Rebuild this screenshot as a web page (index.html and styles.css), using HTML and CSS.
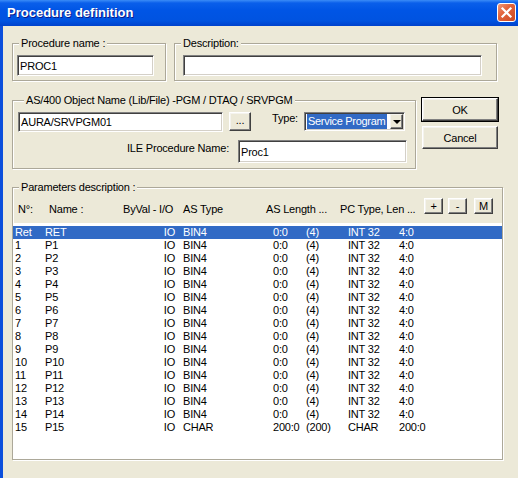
FILE: index.html
```html
<!DOCTYPE html>
<html>
<head>
    <link rel="stylesheet" href="styles.css">
</head>
<body>
    <div class="window">
        <div class="titlebar">
            <span class="title">Procedure definition</span>
            <span class="close-btn">
                <svg width="17" height="17" viewBox="0 0 17 17">
                    <path d="M4.5 4.5 L12.5 12.5 M12.5 4.5 L4.5 12.5" stroke="#fff" stroke-width="2.2" stroke-linecap="square"/>
                </svg>
            </span>
        </div>
        <div class="client">
            <div class="row-top">
                <fieldset class="group g-name">
                    <legend>Procedure name :</legend>
                    <input class="edit e-name" type="text" value="PROC1">
                </fieldset>
                <fieldset class="group g-desc">
                    <legend>Description:</legend>
                    <input class="edit e-desc" type="text" value="">
                </fieldset>
            </div>

            <div class="row-mid">
                <fieldset class="group g-obj">
                    <legend>AS/400 Object Name (Lib/File) -PGM / DTAQ / SRVPGM</legend>
                    <div class="obj-line">
                        <input class="edit e-obj" type="text" value="AURA/SRVPGM01">
                        <button class="btn btn-browse">...</button>
                        <span class="lbl lbl-type">Type:</span>
                        <div class="combo">
                            <span class="combo-text">Service Program</span>
                            <span class="combo-arrow"><span class="tri"></span></span>
                        </div>
                    </div>
                    <div class="ile-line">
                        <span class="lbl lbl-ile">ILE Procedure Name:</span>
                        <input class="edit e-ile" type="text" value="Proc1">
                    </div>
                </fieldset>
                <div class="actions">
                    <button class="btn btn-ok">OK</button>
                    <button class="btn btn-cancel">Cancel</button>
                </div>
            </div>

            <fieldset class="group g-params">
                <legend>Parameters description :</legend>
                <div class="params-head">
                    <span class="h-num">N°:</span>
                    <span class="h-name">Name :</span>
                    <span class="h-io">ByVal - I/O</span>
                    <span class="h-type">AS Type</span>
                    <span class="h-len">AS Length ...</span>
                    <span class="h-pc">PC Type, Len ...</span>
                    <button class="btn btn-small">+</button>
                    <button class="btn btn-small">-</button>
                    <button class="btn btn-small btn-m">M</button>
                </div>
                <div class="plist" id="plist"></div>
            </fieldset>
        </div>
    </div>

    <script>
        // parameter rows: num, name, io, type, len, (len), pc type, pc len
        const rows = [['Ret', 'RET', 'IO', 'BIN4', '0:0', '(4)', 'INT 32', '4:0']];
        for (let i = 1; i <= 14; i++) {
            rows.push([String(i), 'P' + i, 'IO', 'BIN4', '0:0', '(4)', 'INT 32', '4:0']);
        }
        rows.push(['15', 'P15', 'IO', 'CHAR', '200:0', '(200)', 'CHAR', '200:0']);

        const list = document.getElementById('plist');
        rows.forEach((r, idx) => {
            const row = document.createElement('div');
            row.className = 'prow' + (idx === 0 ? ' selected' : '');
            r.forEach((val, c) => {
                const cell = document.createElement('span');
                cell.className = 'c' + c;
                cell.textContent = val;
                row.appendChild(cell);
            });
            list.appendChild(row);
        });
    </script>
</body>
</html>
```

FILE: styles.css
```css
* {
    box-sizing: border-box;
}
body {
    margin: 0;
    width: 518px;
    height: 478px;
    overflow: hidden;
    background-color: #ece9d8;
    font-family: "Liberation Sans", Arial, sans-serif;
    font-size: 11px;
    letter-spacing: -0.2px;
    color: #000;
}
.window {
    height: 478px;
    display: flex;
    flex-direction: column;
}
.titlebar {
    height: 26px;
    flex: none;
    display: flex;
    align-items: center;
    justify-content: space-between;
    padding-left: 7px;
    background: linear-gradient(#3b8cf7 0, #0a5fea 3px, #0055e5 40%, #0053e0 80%, #0042cc 100%);
}
.title {
    color: #fff;
    font-size: 13px;
    font-weight: bold;
    letter-spacing: 0;
    text-shadow: 1px 1px #0a1a8a;
    margin-top: -1px;
}
.close-btn {
    width: 19px;
    height: 19px;
    margin-right: 2px;
    margin-top: -1px;
    border: 1px solid #fff;
    border-radius: 3px;
    background: linear-gradient(135deg, #f09a7a 0, #e2643c 40%, #cc4a22 100%);
    display: flex;
    align-items: center;
    justify-content: center;
}
.client {
    flex: 1;
    border-left: 3px solid #0b4fdc;
    padding: 11px 0 0 9px;
}

/* group boxes */
.group {
    margin: 0;
    padding: 0;
    min-width: 0;
    border: 1px solid #aca899;
    box-shadow: 1px 1px 0 #fff, inset 1px 1px 0 #fff;
}
.group legend {
    margin-left: 6px;
    padding: 0 2px;
    line-height: 13px;
    background-color: #ece9d8;
}

/* sunken edit boxes */
.edit {
    display: block;
    margin: 0;
    padding: 0 2px;
    font: inherit;
    letter-spacing: inherit;
    color: #000;
    background-color: #fff;
    border: 1px solid;
    border-color: #808080 #fff #fff #808080;
    box-shadow: inset 1px 1px 0 #404040, inset -1px -1px 0 #d4d0c8;
    outline: none;
}

/* raised buttons */
.btn {
    margin: 0;
    padding: 0;
    font: inherit;
    letter-spacing: inherit;
    color: #000;
    background-color: #ece9d8;
    border: 1px solid;
    border-color: #fff #404040 #404040 #fff;
    box-shadow: inset -1px -1px 0 #808080, inset 1px 1px 0 #f4f3ee;
    display: flex;
    align-items: center;
    justify-content: center;
}
.lbl {
    line-height: 13px;
    white-space: nowrap;
}

.row-top {
    display: flex;
    gap: 8px;
}
.g-name {
    width: 154px;
}
.e-name {
    width: 137px;
    height: 21px;
    margin: 5px 0 4px 4px;
}
.g-desc {
    width: 323px;
}
.e-desc {
    width: 299px;
    height: 21px;
    margin: 5px 0 4px 8px;
}

.row-mid {
    display: flex;
    margin-top: 13px;
}
.g-obj {
    width: 404px;
    padding: 0 0 5px 5px;
}
.obj-line {
    display: flex;
    align-items: flex-start;
    margin-top: 5px;
}
.e-obj {
    width: 205px;
    height: 20px;
}
.btn-browse {
    width: 22px;
    height: 19px;
    margin-left: 6px;
    padding-bottom: 3px;
}
.lbl-type {
    width: 32px;
    margin-left: 21px;
    margin-top: 0;
}
.combo {
    width: 101px;
    height: 19px;
    display: flex;
    align-items: stretch;
    background-color: #fff;
    border: 1px solid;
    border-color: #808080 #fff #fff #808080;
    box-shadow: inset 1px 1px 0 #404040, inset -1px -1px 0 #d4d0c8;
    padding: 1px 1px 1px 2px;
}
.combo-text {
    flex: 1;
    background-color: #316ac5;
    color: #fff;
    line-height: 15px;
    padding-left: 1px;
    margin-right: 3px;
    white-space: nowrap;
    overflow: hidden;
    letter-spacing: -0.3px;
}
.combo-arrow {
    width: 13px;
    flex: none;
    background-color: #ece9d8;
    border: 1px solid;
    border-color: #f4f3ee #404040 #404040 #f4f3ee;
    box-shadow: inset -1px -1px 0 #808080;
    display: flex;
    align-items: center;
    justify-content: center;
}
.tri {
    width: 0;
    height: 0;
    border-left: 4px solid transparent;
    border-right: 4px solid transparent;
    border-top: 4px solid #000;
}
.ile-line {
    display: flex;
    align-items: flex-start;
    margin-top: 8px;
}
.lbl-ile {
    width: 211px;
    text-align: right;
    margin-top: 2px;
    margin-right: 9px;
}
.e-ile {
    width: 169px;
    height: 23px;
}

.actions {
    display: flex;
    flex-direction: column;
    gap: 5px;
    margin-left: 6px;
    padding-top: 4px;
}
.actions .btn {
    width: 76px;
    height: 23px;
}
.btn-ok {
    outline: 1px solid #000;
    outline-offset: 0;
}

/* parameters */
.g-params {
    width: 491px;
    margin-top: 12px;
}
.params-head {
    height: 29px;
    display: flex;
    align-items: flex-start;
    padding-left: 5px;
}
.params-head span {
    margin-top: 9px;
    line-height: 13px;
    white-space: nowrap;
}
.h-num { width: 31px; }
.h-name { width: 74px; }
.h-io { width: 60px; }
.h-type { width: 83px; }
.h-len { width: 74px; }
.h-pc { width: 84px; }
.btn-small {
    width: 19px;
    height: 16px;
    margin-top: 4px;
    margin-right: 5px;
}
.btn-m {
    margin-left: 2px;
}
.plist {
    height: 236px;
    background-color: #fff;
    padding-top: 3px;
}
.prow {
    height: 13px;
    line-height: 13px;
    display: grid;
    grid-template-columns: 30px 110px 28px 90px 33px 42px 51px 1fr;
    padding-left: 2px;
    white-space: nowrap;
}
.prow.selected {
    background-color: #316ac5;
    color: #fff;
}
.prow .c2 {
    text-align: right;
    padding-right: 8px;
}
```
